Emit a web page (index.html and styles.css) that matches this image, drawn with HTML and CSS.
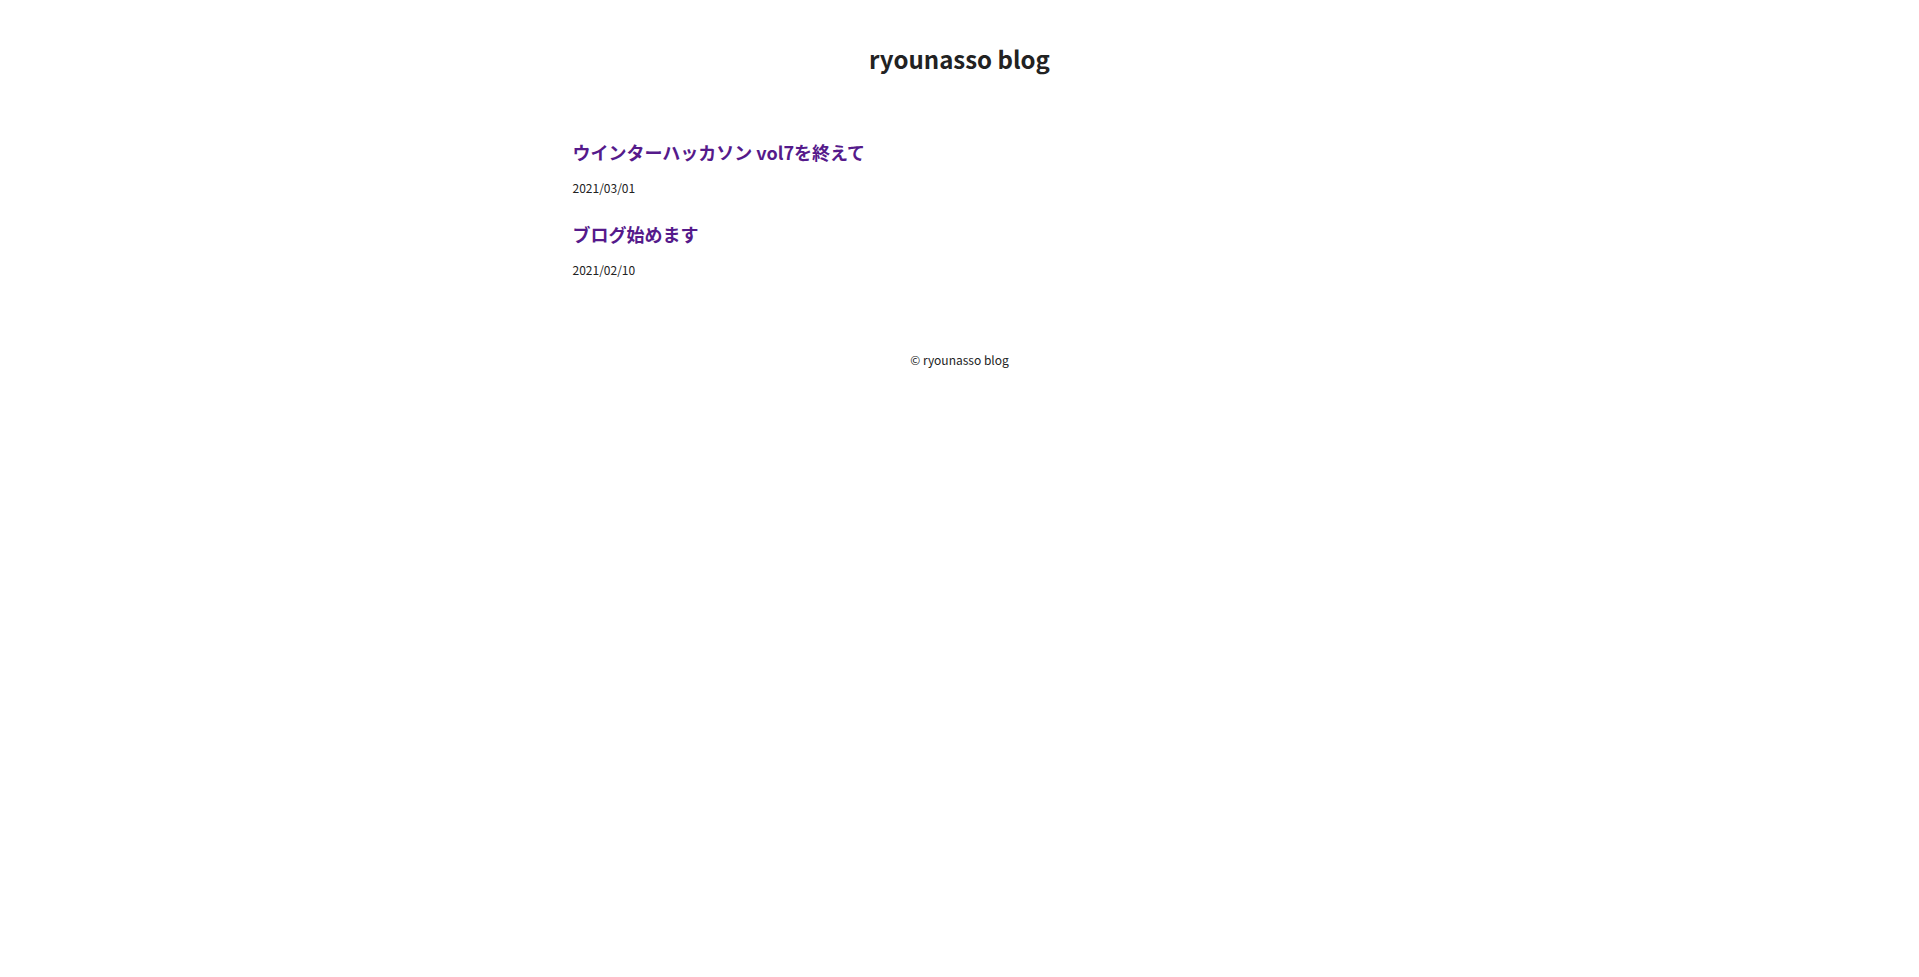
FILE: index.html
```html
<!DOCTYPE html>
<html lang="ja">
<head>
<meta charset="utf-8">
<title>ryounasso blog</title>
<link rel="stylesheet" href="styles.css">
</head>
<body>
<header class="site-header">
  <h1 class="site-title">ryounasso blog</h1>
</header>
<main class="posts">
  <article class="post">
    <h3 class="post-title"><a href="#">ウインターハッカソン vol7を終えて</a></h3>
    <p class="post-date">2021/03/01</p>
  </article>
  <article class="post">
    <h3 class="post-title"><a href="#">ブログ始めます</a></h3>
    <p class="post-date">2021/02/10</p>
  </article>
</main>
<footer class="site-footer">© ryounasso blog</footer>
</body>
</html>
```
FILE: styles.css
```css
html, body {
  margin: 0;
  padding: 0;
  background: #ffffff;
}
body {
  font-family: "Noto Sans CJK JP", "Noto Sans", sans-serif;
  color: #222222;
}
.site-header {
  display: flex;
  justify-content: center;
  padding-top: 42px;
}
.site-title {
  margin: 0;
  font-size: 24px;
  font-weight: 700;
  line-height: 34px;
  color: #222222;
}
.posts {
  max-width: 774px;
  margin: 0 auto;
  padding-top: 63px;
  display: flex;
  flex-direction: column;
}
.post-title {
  margin: 0;
  font-size: 18px;
  font-weight: 700;
  line-height: 26px;
}
.post-title a {
  color: #551a8b;
  text-decoration: none;
}
.post-date {
  margin: 14px 0 24px;
  font-size: 12px;
  line-height: 18px;
  color: #222222;
}
.site-footer {
  text-align: center;
  font-size: 12px;
  line-height: 18px;
  padding-top: 48px;
  color: #222222;
}
```
